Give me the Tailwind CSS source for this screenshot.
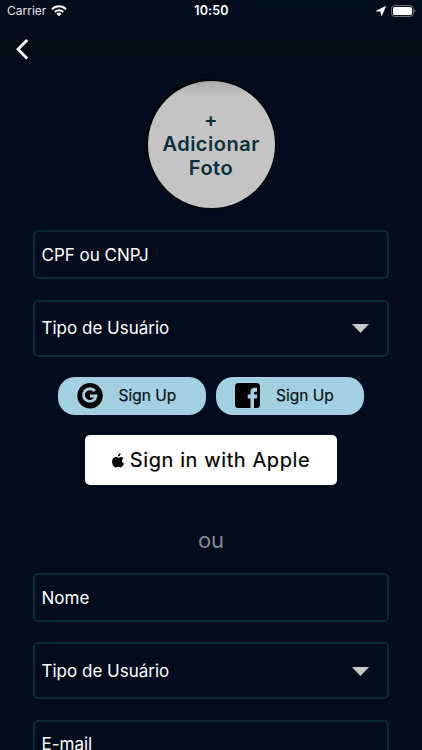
<!DOCTYPE html>
<html lang="pt-BR">
<head>
  <meta charset="UTF-8">
  <meta name="viewport" content="width=device-width, initial-scale=1.0">
  <title>Cadastro</title>
  <script src="https://cdn.jsdelivr.net/npm/@tailwindcss/browser@4"></script>
</head>
<body class="bg-[#020c1c]">
  <div class="relative w-[422px] h-[750px] overflow-hidden bg-[#020c1c] text-white font-['Inter','Liberation_Sans',sans-serif]">

    <!-- Cabeçalho -->
    <header class="h-[90px] bg-linear-to-b from-[#020d1c] from-5% via-[#020a14] via-50% to-[#020c1c]">
      <!-- Barra de status -->
      <div class="grid grid-cols-3 items-center h-[22px] pl-[7px] pr-[6px]">
        <div class="flex items-center gap-[5px]">
          <span class="text-[12px] leading-none text-gray-200">Carrier</span>
          <svg class="w-[16px] h-[12px]" viewBox="0 0 16 12" fill="none" stroke="#fff" stroke-width="2">
            <path d="M1 4.2a10 10 0 0 1 14 0M3.7 7a6.2 6.2 0 0 1 8.6 0"/>
            <path d="M8 11.3 5.5 8.8a3.6 3.6 0 0 1 5 0z" fill="#fff" stroke="none"/>
          </svg>
        </div>
        <span class="text-center text-[12.5px] leading-none font-semibold tracking-[0.2px]">10:50</span>
        <div class="flex items-center justify-end gap-[5px]">
          <svg class="w-[10px] h-[10px]" viewBox="0 0 10 10" fill="#fff" stroke="#fff" stroke-width=".8" stroke-linejoin="round"><path d="M9.5.5 5.6 9.5 4.8 5.3.5 5z"/></svg>
          <svg class="w-[25px] h-[12px]" viewBox="0 0 25 12" fill="none">
            <rect x=".6" y=".6" width="21.8" height="10.8" rx="3" stroke="#747a83"/>
            <rect x="2" y="2" width="19" height="8" rx="1.6" fill="#fff"/>
            <path d="M23.5 4.2v3.6q1.1-.5 1.1-1.8t-1.1-1.8z" fill="#747a83"/>
          </svg>
        </div>
      </div>
      <button class="block ml-[14px] mt-[17px]">
        <svg class="w-[16px] h-[21px]" viewBox="0 0 16 21" fill="none" stroke="#fff" stroke-width="2.8"><path d="M13.2 1.1 4 10.3l9.2 9.2"/></svg>
      </button>
    </header>

    <main class="flex flex-col items-center">
      <!-- Foto -->
      <div class="w-[130px] h-[130px] -mt-[11px] p-[1.5px] rounded-full bg-black">
        <button class="w-full h-full rounded-full bg-linear-to-b from-[#aaaaaa] to-[#c4c4c4] to-12% text-[#0b303b] text-[20px] leading-[24.2px] font-semibold tracking-[0.5px]">
          +<br>Adicionar<br>Foto
        </button>
      </div>

      <div class="w-[356px] h-[49px] mt-[21px] rounded-[5px] border-2 border-[#0b2a37] px-[6.5px] pt-0.5 flex items-center text-[17px]">
        <span>CPF ou CNPJ</span>
      </div>
      <div class="w-[356px] h-[57px] mt-[21px] rounded-[5px] border-2 border-[#0b2a37] pl-[6.5px] pr-[18px] flex items-center justify-between text-[17px]">
        <span>Tipo de Usuário</span>
        <svg class="w-[17px] h-[9px]" viewBox="0 0 17 9" fill="#c8c8c8"><path d="M0 0h17L8.5 9z"/></svg>
      </div>

      <!-- Redes sociais -->
      <div class="flex gap-[10px] mt-[20px]">
        <button class="flex items-center w-[148px] h-[38px] pl-[19px] rounded-[17px] bg-[#a3d1e1] text-[#081116]">
          <svg class="w-[26px] h-[26px]" viewBox="0 0 26 26">
            <circle cx="13" cy="12.7" r="12.7" fill="#000"/>
            <path d="M17.8 8.2A6.3 6.3 0 1 0 19 13H13" fill="none" stroke="#a3d1e1" stroke-width="2.9"/>
          </svg>
          <span class="ml-[15.5px] text-[15.5px] [-webkit-text-stroke:0.2px]">Sign Up</span>
        </button>
        <button class="flex items-center w-[148px] h-[38px] pl-[19px] rounded-[17px] bg-[#a3d1e1] text-[#081116]">
          <svg class="w-[25px] h-[25px] -mt-px" viewBox="0 0 25 25">
            <rect width="25" height="25" rx="3.5" fill="#000"/>
            <path d="M15.5 25v-9.6h-2.8v-4h2.8V9.2c0-3.3 1.8-4.4 4.3-4.4h2.2v4h-1.4c-1.2 0-1.6.5-1.6 1.5v1.1h3.3l-.5 4H19V25z" fill="#a3d1e1"/>
          </svg>
          <span class="ml-[16px] text-[15.5px] [-webkit-text-stroke:0.2px]">Sign Up</span>
        </button>
      </div>
      <button class="flex items-center justify-center gap-[6px] w-[252px] h-[50px] mt-[20px] rounded-[5px] bg-white text-black">
        <svg class="w-[12px] h-[15px]" viewBox="0 0 12 15">
          <path d="M8.7.2c.1 1.7-1.2 3.2-2.8 3.2C5.7 1.8 7.1.4 8.7.2zM11.5 5.2C9.4 6.5 9.6 9.4 11.9 10.4c-.5 1.6-1.8 4-3.2 4-1 0-1.3-.6-2.5-.6s-1.6.6-2.5.6C1.9 14.4.1 11.2.1 8.4c0-2.8 1.7-4.4 3.5-4.4 1.1 0 1.9.7 2.6.7.7 0 1.6-.8 3-.8 1 0 1.8.5 2.3 1.3z"/>
        </svg>
        <span class="text-[20px] tracking-[0.6px] [-webkit-text-stroke:0.2px]">Sign in with Apple</span>
      </button>

      <p class="mt-[39px] text-[22px] leading-[32px] text-[#818790]">ou</p>

      <div class="w-[356px] h-[49px] mt-[17px] rounded-[5px] border-2 border-[#0b2a37] px-[6.5px] pt-0.5 flex items-center text-[17px]">
        <span>Nome</span>
      </div>
      <div class="w-[356px] h-[57px] mt-[20px] rounded-[5px] border-2 border-[#0b2a37] pl-[6.5px] pr-[18px] pt-0.5 flex items-center justify-between text-[17px]">
        <span>Tipo de Usuário</span>
        <svg class="w-[17px] h-[9px] -mt-px" viewBox="0 0 17 9" fill="#c8c8c8"><path d="M0 0h17L8.5 9z"/></svg>
      </div>
      <div class="w-[356px] h-[49px] mt-[21px] rounded-[5px] border-2 border-[#0b2a37] px-[6.5px] flex items-center text-[17px]">
        <span>E-mail</span>
      </div>
    </main>
  </div>
</body>
</html>
